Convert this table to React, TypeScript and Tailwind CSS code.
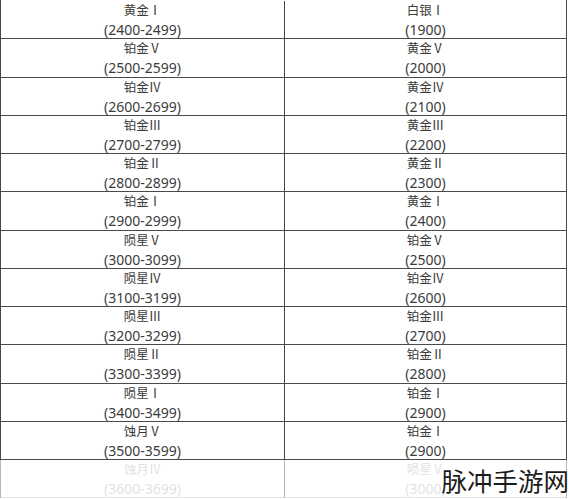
const rows: [string, string, string, string][] = [
  ['黄金Ⅰ', '(2400-2499)', '白银Ⅰ', '(1900)'],
  ['铂金Ⅴ', '(2500-2599)', '黄金Ⅴ', '(2000)'],
  ['铂金Ⅳ', '(2600-2699)', '黄金Ⅳ', '(2100)'],
  ['铂金Ⅲ', '(2700-2799)', '黄金Ⅲ', '(2200)'],
  ['铂金Ⅱ', '(2800-2899)', '黄金Ⅱ', '(2300)'],
  ['铂金Ⅰ', '(2900-2999)', '黄金Ⅰ', '(2400)'],
  ['陨星Ⅴ', '(3000-3099)', '铂金Ⅴ', '(2500)'],
  ['陨星Ⅳ', '(3100-3199)', '铂金Ⅳ', '(2600)'],
  ['陨星Ⅲ', '(3200-3299)', '铂金Ⅲ', '(2700)'],
  ['陨星Ⅱ', '(3300-3399)', '铂金Ⅱ', '(2800)'],
  ['陨星Ⅰ', '(3400-3499)', '铂金Ⅰ', '(2900)'],
  ['蚀月Ⅴ', '(3500-3599)', '铂金Ⅰ', '(2900)'],
  ['蚀月Ⅳ', '(3600-3699)', '陨星Ⅴ', '(3000)'],
]

function Cell({ name, range, divider }: { name: string; range: string; divider?: boolean }) {
  return (
    <div
      className={`flex flex-col items-center justify-center leading-[19px] ${
        divider ? 'border-r border-[#4a4a4a]' : ''
      }`}
    >
      <span className="text-[12.5px]">{name}</span>
      <span className="text-[14px]">{range}</span>
    </div>
  )
}

export default function App() {
  return (
    <div
      className="relative w-[569px] h-[499px] overflow-hidden bg-white text-[#3c3c3c]"
      style={{ fontFamily: '"Noto Sans", "Noto Sans CJK SC", sans-serif' }}
    >
      <div className="w-[567px] pt-px border-x border-[#4a4a4a]">
        {rows.map((r, i) => (
          <div
            key={i}
            className={`grid grid-cols-[284px_1fr] h-[38.25px] border-b ${
              i === rows.length - 1 ? 'border-[#bdbdbd] text-[#b4b4b4]' : 'border-[#4a4a4a]'
            }`}
          >
            <Cell name={r[0]} range={r[1]} divider />
            <Cell name={r[2]} range={r[3]} />
          </div>
        ))}
      </div>

      {/* faded bottom row */}
      <div className="absolute left-0 right-0 top-[460px] h-[38px] bg-white/60 pointer-events-none" />

      {/* watermark */}
      <div
        className="absolute right-0 top-[463px] text-[25.5px] leading-[34px] text-[#1c1c1c]"
        style={{ fontFamily: '"Noto Sans CJK SC", sans-serif', textShadow: '0 0 2px #fff, 0 0 2px #fff' }}
      >
        脉冲手游网
      </div>
    </div>
  )
}
